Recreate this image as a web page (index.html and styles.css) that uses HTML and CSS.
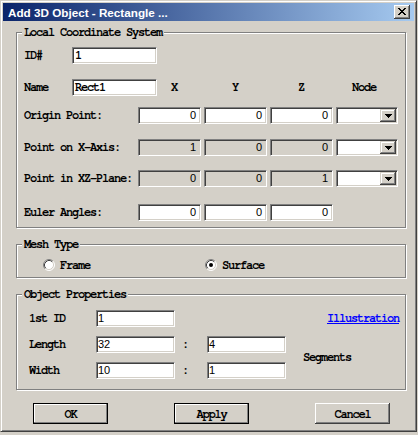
FILE: index.html
```html
<!DOCTYPE html>
<html>
<head>
<meta charset="utf-8">
<title>Add 3D Object - Rectangle</title>
<link rel="stylesheet" href="styles.css">
</head>
<body>
<div class="window">
  <div class="titlebar">
    <span class="title">Add 3D Object - Rectangle ...</span>
    <span class="close"><svg width="8" height="7" viewBox="0 0 8 7" shape-rendering="crispEdges"><path d="M0 0h2v1h1v1h2v-1h1v-1h2v1h-1v1h-1v1h-1v1h1v1h1v1h1v1h-2v-1h-1v-1h-2v1h-1v1h-2v-1h1v-1h1v-1h1v-1h-1v-1h-1v-1h-1z" fill="#000"/></svg></span>
  </div>
  <div class="content">
    <fieldset class="group g-lcs">
      <legend>Local Coordinate System</legend>
      <div class="row r-id"><span class="lbl w48">ID#</span><span class="edit e85">1</span></div>
      <div class="row r-name">
        <span class="lbl w48">Name</span><span class="edit e85">Rect1</span>
        <span class="hdr hx">X</span><span class="hdr hy">Y</span><span class="hdr hz">Z</span><span class="hdr hn">Node</span>
      </div>
      <div class="coords r-origin">
        <span class="lbl">Origin Point:</span>
        <span class="edit num">0</span><span class="edit num">0</span><span class="edit num">0</span>
        <span class="combo"><span class="cbtn"><svg width="7" height="4" viewBox="0 0 7 4" shape-rendering="crispEdges"><path d="M0 0h7v1h-1v1h-1v1h-1v1h-1v-1h-1v-1h-1v-1h-1z" fill="#000"/></svg></span></span>
      </div>
      <div class="coords r-xaxis">
        <span class="lbl">Point on X-Axis:</span>
        <span class="edit num dis">1</span><span class="edit num dis">0</span><span class="edit num dis">0</span>
        <span class="combo"><span class="cbtn"><svg width="7" height="4" viewBox="0 0 7 4" shape-rendering="crispEdges"><path d="M0 0h7v1h-1v1h-1v1h-1v1h-1v-1h-1v-1h-1v-1h-1z" fill="#000"/></svg></span></span>
      </div>
      <div class="coords r-xz">
        <span class="lbl">Point in XZ-Plane:</span>
        <span class="edit num dis">0</span><span class="edit num dis">0</span><span class="edit num dis">1</span>
        <span class="combo"><span class="cbtn"><svg width="7" height="4" viewBox="0 0 7 4" shape-rendering="crispEdges"><path d="M0 0h7v1h-1v1h-1v1h-1v1h-1v-1h-1v-1h-1v-1h-1z" fill="#000"/></svg></span></span>
      </div>
      <div class="coords r-euler">
        <span class="lbl">Euler Angles:</span>
        <span class="edit num">0</span><span class="edit num">0</span><span class="edit num">0</span>
      </div>
    </fieldset>

    <fieldset class="group g-mesh">
      <legend>Mesh Type</legend>
      <div class="radios">
        <label class="radio"><svg width="12" height="12" viewBox="0 0 12 12"><circle cx="6" cy="6" r="5" fill="#fff"/><path d="M2.11 9.89A5.5 5.5 0 0 1 9.89 2.11" fill="none" stroke="#808080"/><path d="M9.89 2.11A5.5 5.5 0 0 1 2.11 9.89" fill="none" stroke="#fff"/><path d="M2.82 9.18A4.5 4.5 0 0 1 9.18 2.82" fill="none" stroke="#404040"/><path d="M9.18 2.82A4.5 4.5 0 0 1 2.82 9.18" fill="none" stroke="#D4D0C8"/></svg><span>Frame</span></label>
        <label class="radio"><svg width="12" height="12" viewBox="0 0 12 12"><circle cx="6" cy="6" r="5" fill="#fff"/><path d="M2.11 9.89A5.5 5.5 0 0 1 9.89 2.11" fill="none" stroke="#808080"/><path d="M9.89 2.11A5.5 5.5 0 0 1 2.11 9.89" fill="none" stroke="#fff"/><path d="M2.82 9.18A4.5 4.5 0 0 1 9.18 2.82" fill="none" stroke="#404040"/><path d="M9.18 2.82A4.5 4.5 0 0 1 2.82 9.18" fill="none" stroke="#D4D0C8"/><circle cx="6" cy="6" r="2" fill="#000"/></svg><span>Surface</span></label>
      </div>
    </fieldset>

    <fieldset class="group g-obj">
      <legend>Object Properties</legend>
      <div class="objgrid">
        <span class="lbl olbl">1st ID</span>
        <span class="edit val c2">1</span>
        <a class="link" href="#">Illustration</a>
        <span class="lbl olbl">Length</span>
        <span class="edit val c2">32</span>
        <span class="colon">:</span>
        <span class="edit val c4">4</span>
        <span class="lbl seg">Segments</span>
        <span class="lbl olbl">Width</span>
        <span class="edit val c2">10</span>
        <span class="colon">:</span>
        <span class="edit val c4">1</span>
      </div>
    </fieldset>

    <div class="buttons">
      <button class="btn default">OK</button>
      <button class="btn default">Apply</button>
      <button class="btn">Cancel</button>
    </div>
  </div>
</div>
</body>
</html>
```

FILE: styles.css
```css
* { box-sizing: border-box; }
html, body { margin: 0; padding: 0; background: #D4D0C8; }
body {
  width: 418px; height: 435px; overflow: hidden;
  font-family: "Nimbus Mono PS", "Nimbus Mono L", "FreeMono", "Courier New", "Liberation Mono", monospace;
  font-size: 12px; font-weight: bold; letter-spacing: -1.2px; color: #000;
}
.window {
  width: 417px; height: 432px;
  background: #D4D0C8;
  border: 1px solid; border-color: #D4D0C8 #404040 #404040 #D4D0C8;
  box-shadow: inset 1px 1px 0 #fff, inset -1px -1px 0 #808080;
  padding: 2px;
}
.titlebar {
  height: 18px; display: flex; align-items: center; justify-content: space-between;
  padding: 0 4px 0 5px;
  background: linear-gradient(90deg, #0A246A, #A6CAF0);
  color: #fff; font: bold 11.7px "Liberation Sans", Arial, sans-serif; letter-spacing: 0;
}
.close {
  width: 16px; height: 14px; display: flex; align-items: center; justify-content: center;
  background: #D4D0C8;
  box-shadow: inset -1px -1px 0 #404040, inset 1px 1px 0 #fff, inset -2px -2px 0 #808080;
  padding-bottom: 1px;
}
.content { padding: 4px 8px 0 13px; }

.group {
  margin: 0; padding: 0 6px 0 7px; min-width: 0;
  border: 1px solid #808080;
  box-shadow: 1px 1px 0 #fff, inset 1px 1px 0 #fff;
}
.group legend {
  margin-left: -2px; padding: 0 2px; height: 14px; line-height: 14px;
  background: #D4D0C8;
}
.g-lcs { padding-bottom: 6px; }
.g-mesh { margin-top: 9px; padding-bottom: 5px; }
.g-obj { margin-top: 9px; padding-bottom: 10px; }

.lbl { white-space: nowrap; line-height: 17px; }
.row { display: flex; height: 17px; }
.w48 { width: 48px; flex: none; }
.r-id { margin-top: 8px; }
.r-name { margin-top: 15px; }
.hdr { line-height: 17px; flex: none; }
.hx { width: 47px; padding-left: 14px; }
.hy { width: 66px; padding-left: 28px; }
.hz { width: 66px; padding-left: 28px; }
.hn { width: 62px; padding-left: 16px; }

.coords {
  display: grid; grid-template-columns: 111px 63px 63px 63px 62px;
  column-gap: 3px; height: 17px;
}
.r-origin { margin-top: 11px; }
.r-xaxis { margin-top: 15px; }
.r-xz { margin-top: 14px; }
.r-euler { margin-top: 17px; }

.edit {
  display: block; height: 17px; background: #fff;
  border: 1px solid; border-color: #808080 #fff #fff #808080;
  box-shadow: inset 1px 1px 0 #404040, inset -1px -1px 0 #D4D0C8;
  padding: 0 2px; line-height: 15px; white-space: nowrap; overflow: hidden;
}
.e85 { width: 85px; flex: none; }
.num {
  text-align: right; padding-right: 4px;
  font-family: "Liberation Sans", Arial, sans-serif; font-size: 11px; font-weight: normal; letter-spacing: 0;
}
.dis { background: #D4D0C8; }

.combo {
  display: flex; justify-content: flex-end; height: 17px; background: #fff;
  border: 1px solid; border-color: #808080 #fff #fff #808080;
  box-shadow: inset 1px 1px 0 #404040, inset -1px -1px 0 #D4D0C8;
  padding: 1px;
}
.cbtn {
  width: 16px; height: 13px; display: flex; align-items: center; justify-content: center;
  background: #D4D0C8;
  box-shadow: inset -1px -1px 0 #404040, inset 1px 1px 0 #D4D0C8, inset -2px -2px 0 #808080, inset 2px 2px 0 #fff;
}

.radios {
  display: grid; grid-template-columns: 162px auto;
  padding-left: 19px; margin-top: 7px; height: 14px; align-items: center;
}
.radio { display: flex; align-items: center; gap: 5px; line-height: 14px; }
.radio svg { flex: none; margin-top: -1px; }

.objgrid {
  display: grid;
  grid-template-columns: 72px 79px 32px 79px 1fr;
  grid-template-rows: 17px 17px 17px;
  row-gap: 9px; margin-top: 9px;
}
.olbl { grid-column: 1; padding-left: 5px; }
.c2 { grid-column: 2; }
.c4 { grid-column: 4; }
.val { font-family: "Liberation Sans", Arial, sans-serif; font-size: 11px; font-weight: normal; letter-spacing: 0; padding-left: 1px; }
.colon { grid-column: 3; padding-left: 7px; line-height: 17px; }
.link {
  grid-column: 5; grid-row: 1; justify-self: end; align-self: center;
  color: #0000FF; text-decoration: underline; line-height: 17px;
}
.seg { grid-column: 5; grid-row: 2 / span 2; align-self: center; padding-left: 17px; }

.buttons { display: flex; gap: 66px; padding-left: 17px; margin-top: 13px; }
.btn {
  width: 75px; height: 21px; margin: 0; padding: 0;
  font: inherit; letter-spacing: inherit; color: #000;
  background: #D4D0C8; border: none;
  box-shadow: inset -1px -1px 0 #404040, inset 1px 1px 0 #fff, inset -2px -2px 0 #808080;
}
.btn.default {
  border: 1px solid #000;
  box-shadow: inset -1px -1px 0 #808080, inset 1px 1px 0 #fff;
}
```
